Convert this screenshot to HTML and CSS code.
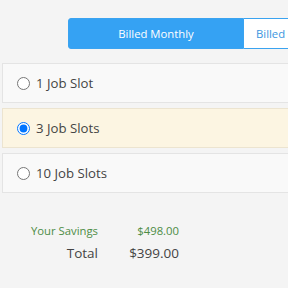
FILE: index.html
```html
<!doctype html>
<html>
<head>
 <meta charset="utf-8">
 <title>Job Slots</title>
 <link rel="stylesheet" href="styles.css">
</head>
<body>
  <div id="page">
    <div class="billing">
      <button class="bill active">Billed Monthly</button>
      <button class="bill">Billed</button>
    </div>
    <ul class="slots">
      <li class="slot"><label><input type="radio" name="slots"> 1 Job Slot</label></li>
      <li class="slot selected"><label><input type="radio" name="slots" checked> 3 Job Slots</label></li>
      <li class="slot"><label><input type="radio" name="slots"> 10 Job Slots</label></li>
    </ul>
    <div class="summary">
      <span class="lbl savings">Your Savings</span><span class="val savings">$498.00</span>
      <span class="lbl total">Total</span><span class="val total">$399.00</span>
    </div>
  </div>
</body>
</html>
```
FILE: styles.css
```css
html,body{margin:0;padding:0;background:#f4f4f4;overflow:hidden;}
body,button,input{font-family:'Open Sans','Noto Sans',sans-serif;}
ul{list-style:none;margin:0;padding:0;}
#page{width:300px;padding-top:18px;}
.billing{display:flex;padding-left:68px;}
.bill{flex-shrink:0;height:31px;margin:0;border:1px solid #3aa3f0;font-size:11.3px;padding:0 12px;white-space:nowrap;}
.bill.active{width:176px;background:#35a2f3;color:#fff;border-radius:3px 0 0 3px;}
.bill:not(.active){background:#fff;color:#3a96e0;text-align:left;border-left:none;width:60px;}
.slots{margin:14px 0 0 2px;}
.slot{height:38px;border:1px solid #e4e4e4;background:#f9f9f9;margin-bottom:5px;display:flex;align-items:center;padding-left:14px;}
.slot.selected{background:#fcf5e2;border-color:#ece4d0;}
.slot label{display:flex;align-items:center;font-size:13.2px;color:#444;}
.slot input{width:13px;height:13px;margin:0 6px 0 0;}
.summary{display:grid;grid-template-columns:98px 81px;align-items:baseline;margin-top:30px;row-gap:6px;}
.lbl,.val{text-align:right;}
.savings{color:#4d8c45;font-size:11.3px;}
.total{color:#444;font-size:13.5px;}
```
